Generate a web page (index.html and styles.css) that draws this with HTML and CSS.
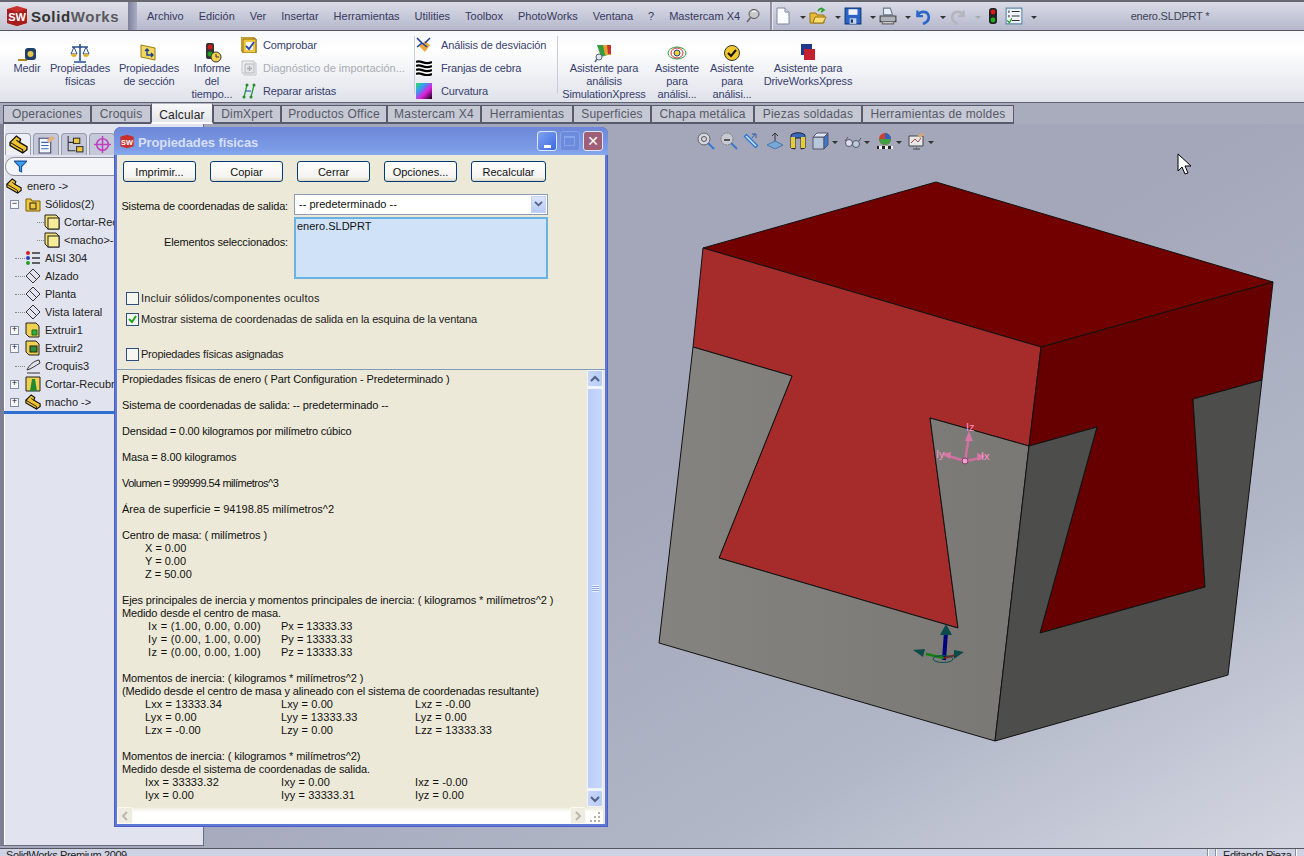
FILE: index.html
```html
<!DOCTYPE html>
<html lang="es">
<head>
<meta charset="utf-8">
<title>SolidWorks - enero.SLDPRT</title>
<link rel="stylesheet" href="styles.css">
</head>
<body>
<div class="app">
  <header class="topbar">
    <div class="logo">
      <svg class="swcube" viewBox="0 0 24 22"><path d="M2 4 12 1l10 3v14l-10 3-10-3z" fill="#c8302c"/><path d="M2 4l10 3 10-3v14l-10 3-10-3z" fill="#a81c1c"/><text x="12" y="16" class="swtxt">SW</text></svg>
      <span class="logoname"><b>Solid</b><i>Works</i></span>
    </div>
    <div class="logoedge"></div>
    <nav class="menu">
      <span>Archivo</span><span>Edición</span><span>Ver</span><span>Insertar</span><span>Herramientas</span><span>Utilities</span><span>Toolbox</span><span>PhotoWorks</span><span>Ventana</span><span>?</span><span>Mastercam X4</span>
      <svg class="pin" viewBox="0 0 16 16"><path d="M3 14l4-5" stroke="#666" stroke-width="1.5"/><ellipse cx="10" cy="6" rx="5" ry="4.5" fill="#c9c9c9" stroke="#555"/><path d="M8 4a3 3 0 0 1 4 0" stroke="#fff" fill="none"/></svg>
    </nav>
    <div class="quick">
      <svg class="qi" viewBox="0 0 16 18"><path d="M2 1h8l4 4v12H2z" fill="#fafcff" stroke="#7c8aa0"/><path d="M10 1v4h4" fill="#d5dce8" stroke="#7c8aa0"/></svg><i class="arr"></i>
      <svg class="qi" viewBox="0 0 18 18"><path d="M1 6h6l1 2h7v8H1z" fill="#e8b93a" stroke="#9a7412"/><path d="M4 16l2-6h11l-3 6z" fill="#f8dc74" stroke="#9a7412"/><path d="M9 4c2-3 4-3 5-1M12 1l3 2-3 2" stroke="#2ca02c" stroke-width="1.6" fill="none"/></svg><i class="arr"></i>
      <svg class="qi" viewBox="0 0 16 16"><path d="M1 1h14v14H1z" fill="#2b63c6" stroke="#123a80"/><path d="M4 2h8v5H4z" fill="#f0f4fa"/><path d="M5 10h6v5H5z" fill="#c9d3e2"/><path d="M6 11h2v3H6z" fill="#123a80"/></svg><i class="arr"></i>
      <svg class="qi" viewBox="0 0 16 16"><path d="M4 1h6l2 6H4z" fill="#e8eef8" stroke="#6b7a90"/><path d="M1 8h14v5H1z" fill="#aeb2ba" stroke="#444"/><path d="M3 13h10v2H3z" fill="#eee" stroke="#666"/></svg><i class="arr"></i>
      <svg class="qi" viewBox="0 0 16 16"><path d="M3 3v5h5" fill="none" stroke="#2b66c8" stroke-width="2"/><path d="M3 8c2-5 9-5 10 0s-3 6-5 7" fill="none" stroke="#2b66c8" stroke-width="2.4"/></svg><i class="arr"></i>
      <svg class="qi" viewBox="0 0 16 16"><path d="M13 3v5H8" fill="none" stroke="#b4b6bb" stroke-width="2"/><path d="M13 8C11 3 4 3 3 8s3 6 5 7" fill="none" stroke="#b4b6bb" stroke-width="2.4"/></svg><i class="arr off"></i>
      <svg class="qi" viewBox="0 0 16 18"><rect x="4" y="1" width="8" height="16" rx="3" fill="#222"/><circle cx="8" cy="5" r="2.4" fill="#e01818"/><circle cx="8" cy="13" r="2.4" fill="#20b020"/></svg>
      <svg class="qi qlist" viewBox="0 0 16 16"><path d="M1 1h14v14H1z" fill="#eef3f8" stroke="#5f8aa8"/><path d="M6 4h7M6 8h7M6 12h7" stroke="#333"/><path d="M3 3h1v2H3zM3 7h1v2H3z" fill="#333"/><path d="M2 12l2 2 2-4" stroke="#1a9a1a" fill="none"/></svg><i class="arr"></i>
    </div>
    <div class="doc">enero.SLDPRT *</div>
  </header>

  <section class="ribbon">
    <div class="rb w38">
      <svg class="ri" viewBox="0 0 22 22"><path d="M2 18h9" stroke="#b08a20" stroke-width="2"/><rect x="9" y="6" width="11" height="12" rx="3" fill="#1f3f66"/><circle cx="14.500" cy="12" r="3" fill="#e5c64a"/></svg>
      <span>Medir</span>
    </div>
    <div class="rb w68">
      <svg class="ri" viewBox="0 0 22 22"><path d="M11 2v17M3 5h16M5 20h12" stroke="#274c8c" stroke-width="1.6"/><path d="M5 5l-3 7h6zM17 5l-3 7h6z" fill="none" stroke="#274c8c"/><path d="M2 12h6a3 3 0 0 1-6 0zM14 12h6a3 3 0 0 1-6 0z" fill="#e0b030"/></svg>
      <span>Propiedades<br>físicas</span>
    </div>
    <div class="rb w70">
      <svg class="ri" viewBox="0 0 22 22"><path d="M3 3l14 3v12L3 15z" fill="#f0d860" stroke="#9a7d12"/><path d="M9 7v6h6M7 9l2-2 2 2M13 11l2 2-2 2" stroke="#1f3f8c" fill="none" stroke-width="1.400"/></svg>
      <span>Propiedades<br>de sección</span>
    </div>
    <div class="rb w56">
      <svg class="ri" viewBox="0 0 22 22"><rect x="5" y="1" width="8" height="16" rx="2" fill="#333"/><circle cx="9" cy="5" r="2.500" fill="#d01818"/><circle cx="9" cy="12" r="2.500" fill="#20a020"/><circle cx="15" cy="15" r="5" fill="#f2d050" stroke="#333"/><path d="M15 12v3h3" stroke="#333" fill="none"/></svg>
      <span>Informe<br>del<br>tiempo...</span>
    </div>
    <div class="rcol c174">
      <div class="rs"><svg class="si" viewBox="0 0 16 16"><path d="M0 0h13v2h2v14H2v-2H0z" fill="#ecc14a" stroke="#8e6d10" stroke-width=".8"/><path d="M2 2h13v14H2z" fill="#f0c840" stroke="#8e6d10"/><path d="M5 5h7v8H5z" fill="#f8f8ff"/><path d="M5 9l3 3 5-7" stroke="#2a4ab0" stroke-width="1.800" fill="none"/></svg><span>Comprobar</span></div>
      <div class="rs dis"><svg class="si" viewBox="0 0 16 16"><path d="M1 1h12v2h2v12H3v-2H1z" fill="#eee" stroke="#c2c4ca"/><path d="M4 4h9v9H4z" fill="#e4e5e8" stroke="#b4b6bc"/><path d="M8.500 6v5M6 8.500h5" stroke="#aaa" stroke-width="1.400"/></svg><span>Diagnóstico de importación...</span></div>
      <div class="rs"><svg class="si" viewBox="0 0 16 16"><path d="M3 14 6 2M10 14 13 2" stroke="#20a030" stroke-width="1.300"/><circle cx="3" cy="14" r="1.500" fill="#2a8a2a"/><circle cx="6" cy="2" r="1.500" fill="#2a8a2a"/><circle cx="10" cy="14" r="1.500" fill="#2a8a2a"/><circle cx="13" cy="2" r="1.500" fill="#2a8a2a"/><path d="M5 8h5" stroke="#2040b0"/></svg><span>Reparar aristas</span></div>
    </div>
    <i class="rsep"></i>
    <div class="rcol c142">
      <div class="rs"><svg class="si" viewBox="0 0 16 16"><path d="M3 9l6-5 5 4-5 7z" fill="#e9a83c"/><path d="M1 1l5 5M14 1l-5 5M1 10l5-4M6 6l5 4" stroke="#1b3aa8" stroke-width="1.500"/></svg><span>Análisis de desviación</span></div>
      <div class="rs"><svg class="si" viewBox="0 0 16 16"><path d="M0 0h16v16H0z" fill="#fff"/><path d="M0 2c5-3 8 4 16 0M0 6c5-3 8 4 16 0M0 10c5-3 8 4 16 0M0 14c5-3 8 4 16 0" stroke="#000" stroke-width="2.200" fill="none"/></svg><span>Franjas de cebra</span></div>
      <div class="rs"><svg class="si" viewBox="0 0 16 16"><defs><linearGradient id="cv" x1="0" y1="0" x2="1" y2="1"><stop offset="0" stop-color="#30e060"/><stop offset=".3" stop-color="#30a0f0"/><stop offset=".6" stop-color="#e020e0"/><stop offset="1" stop-color="#100010"/></linearGradient></defs><rect width="16" height="16" fill="url(#cv)"/></svg><span>Curvatura</span></div>
    </div>
    <i class="rsep"></i>
    <div class="rb w90 ml2">
      <svg class="ri" viewBox="0 0 22 22"><path d="M4 3h14v9L8 15z" fill="#3a9a40"/><path d="M10 3h8v10h-6z" fill="#e8a030"/><path d="M14 3h4v9h-3z" fill="#c83030"/><circle cx="6" cy="15" r="3" fill="#dfe8f0" stroke="#567"/><path d="M4 17l-2 3" stroke="#567" stroke-width="1.500"/></svg>
      <span>Asistente para<br>análisis<br>SimulationXpress</span>
    </div>
    <div class="rb w56">
      <svg class="ri" viewBox="0 0 22 22"><ellipse cx="11" cy="11" rx="9" ry="6" fill="none" stroke="#2a9a40"/><ellipse cx="11" cy="11" rx="6" ry="5" fill="none" stroke="#d03030"/><circle cx="11" cy="11" r="3" fill="#f0d020" stroke="#2040a0"/></svg>
      <span>Asistente<br>para<br>análisi...</span>
    </div>
    <div class="rb w54">
      <svg class="ri" viewBox="0 0 22 22"><circle cx="11" cy="11" r="7.500" fill="#f2c830" stroke="#333"/><path d="M7 11l3 3 5-6" stroke="#111" stroke-width="2" fill="none"/></svg>
      <span>Asistente<br>para<br>análisi...</span>
    </div>
    <div class="rb w98">
      <svg class="ri" viewBox="0 0 22 22"><rect x="4" y="2" width="11" height="11" fill="#1f3a8c"/><rect x="7" y="7" width="11" height="11" fill="#c42030"/></svg>
      <span>Asistente para<br>DriveWorksXpress</span>
    </div>
  </section>

  <div class="tabstrip">
    <span class="tab t88">Operaciones</span><span class="tab t60">Croquis</span><span class="tab active t62">Calcular</span><span class="tab t68">DimXpert</span><span class="tab t106">Productos Office</span><span class="tab t94">Mastercam X4</span><span class="tab t92">Herramientas</span><span class="tab t78">Superficies</span><span class="tab t103">Chapa metálica</span><span class="tab t108">Piezas soldadas</span><span class="tab t152">Herramientas de moldes</span>
  </div>

  <main class="work">
    <aside class="panel">
      <div class="ptabs">
        <span class="ptab on"><svg viewBox="0 0 18 18"><path d="M1 7 7 1l4 3-1 3 7 4v3l-4 3-12-7z" fill="#f0c430" stroke="#111" stroke-width="1.300"/><path d="M1 7l12 7v3M7 5l3 2" fill="none" stroke="#111"/></svg></span>
        <span class="ptab"><svg viewBox="0 0 18 18"><path d="M2 3h11v14H2z" fill="#f4f8ff" stroke="#446"/><path d="M4 7h7M4 10h7M4 13h7" stroke="#3a6ac0"/><path d="M9 5l5-4 3 2-5 4z" fill="#e8b080"/></svg></span>
        <span class="ptab"><svg viewBox="0 0 18 18"><path d="M3 1v14h7M3 7h7" stroke="#333" fill="none"/><rect x="8" y="3" width="6" height="5" fill="#f0c840" stroke="#333"/><rect x="11" y="11" width="6" height="5" fill="#f0c840" stroke="#333"/></svg></span>
        <span class="ptab"><svg viewBox="0 0 18 18"><circle cx="9" cy="9" r="5.500" fill="none" stroke="#c040c0" stroke-width="1.500"/><path d="M9 1v16M1 9h16" stroke="#c040c0" stroke-width="1.500"/></svg></span>
      </div>
      <div class="filter"><svg viewBox="0 0 12 12"><path d="M0 1h12L7 6v5L5 10V6z" fill="#38a0e8" stroke="#1a50a0"/></svg></div>
      <ul class="tree">
        <li class="root"><svg class="ti" viewBox="0 0 18 18"><path d="M1 7 7 1l4 3-1 3 7 4v3l-4 3-12-7z" fill="#f0c430" stroke="#111" stroke-width="1.300"/><path d="M1 7l12 7v3M7 5l3 2" fill="none" stroke="#111"/></svg><span>enero -&gt;</span></li>
        <li><b class="box">−</b><svg class="ti" viewBox="0 0 16 16"><path d="M1 3h5l1 2h8v10H1z" fill="#f0c840" stroke="#7a5c00"/><rect x="5" y="7" width="6" height="6" fill="none" stroke="#222"/></svg><span>Sólidos(2)</span></li>
        <li class="sub"><svg class="ti" viewBox="0 0 16 16"><path d="M1 1h11l3 3v11H4l-3-3z" fill="#f6e070" stroke="#222"/><rect x="4" y="4" width="11" height="11" fill="#f8ec98" stroke="#222"/></svg><span>Cortar-Recubrir1</span></li>
        <li class="sub"><svg class="ti" viewBox="0 0 16 16"><path d="M1 1h11l3 3v11H4l-3-3z" fill="#f6e070" stroke="#222"/><rect x="4" y="4" width="11" height="11" fill="#f8ec98" stroke="#222"/></svg><span>&lt;macho&gt;-&lt;Saliente&gt;</span></li>
        <li class="nob"><svg class="ti" viewBox="0 0 16 16"><circle cx="3" cy="3" r="2" fill="#d02020"/><circle cx="3" cy="8" r="2" fill="#2040c0"/><circle cx="3" cy="13" r="2" fill="#20a020"/><path d="M7 3h8M7 8h8M7 13h8" stroke="#333" stroke-width="1.500"/></svg><span>AISI 304</span></li>
        <li class="nob"><svg class="ti" viewBox="0 0 16 16"><path d="M8 1l7 7-7 7-7-7zM5 5l7 7" fill="none" stroke="#333"/></svg><span>Alzado</span></li>
        <li class="nob"><svg class="ti" viewBox="0 0 16 16"><path d="M8 1l7 7-7 7-7-7zM5 5l7 7" fill="none" stroke="#333"/></svg><span>Planta</span></li>
        <li class="nob"><svg class="ti" viewBox="0 0 16 16"><path d="M8 1l7 7-7 7-7-7zM5 5l7 7" fill="none" stroke="#333"/></svg><span>Vista lateral</span></li>
        <li><b class="box">+</b><svg class="ti" viewBox="0 0 16 16"><path d="M1 1h10l3 3v11H4l-3-3z" fill="#f0d050" stroke="#222"/><path d="M7 8l5 0v5H7z" fill="#30b040" stroke="#1a6a20"/></svg><span>Extruir1</span></li>
        <li><b class="box">+</b><svg class="ti" viewBox="0 0 16 16"><path d="M1 1h10l3 3v11H4l-3-3z" fill="#f0d050" stroke="#222"/><rect x="5" y="6" width="7" height="6" fill="#30903a" stroke="#222"/></svg><span>Extruir2</span></li>
        <li class="nob"><svg class="ti" viewBox="0 0 16 16"><path d="M2 15h13M2 12C4 7 9 3 14 2l1 3C10 8 6 11 2 12z" fill="none" stroke="#333"/></svg><span>Croquis3</span></li>
        <li><b class="box">+</b><svg class="ti" viewBox="0 0 16 16"><path d="M1 1h14v14H1z" fill="#f0d050" stroke="#222"/><path d="M5 15 7 3h3l2 12z" fill="#208a30"/></svg><span>Cortar-Recubrir1</span></li>
        <li><b class="box">+</b><svg class="ti" viewBox="0 0 18 18"><path d="M1 7 7 1l4 3-1 3 7 4v3l-4 3-12-7z" fill="#f0c430" stroke="#111" stroke-width="1.300"/><path d="M1 7l12 7v3M7 5l3 2" fill="none" stroke="#111"/></svg><span>macho -&gt;</span></li>
      </ul>
      <div class="prule"></div>
    </aside>

    <section class="viewport">
      <svg class="model" viewBox="204 124 1100 724">
        <defs><linearGradient id="gl" x1="0" y1="0" x2="1" y2="0"><stop offset="0" stop-color="#858380"/><stop offset="1" stop-color="#7a7874"/></linearGradient></defs>
        <g stroke="#111" stroke-width="1" stroke-linejoin="round">
          <path d="M703 248 936 182 1273 282 1041 347z" fill="#730000"/>
          <path d="M693 347 703 248 1041 347 1029 446 930 418 958 628 719 558 792 376z" fill="#a62c2c"/>
          <path d="M693 347 792 376 719 558 958 628 930 418 1029 446 995 741 659 643z" fill="url(#gl)"/>
          <path d="M1041 347 1273 282 1262 380 1193 399 1205 587 1040 633 1097 427 1029 446z" fill="#660000"/>
          <path d="M1029 446 1097 427 1040 633 1205 587 1193 399 1262 380 1228 675 995 741z" fill="#4d4d4b"/>
        </g>
        <g class="triad">
          <path d="M965 461 969 436M965 461 945 455M965 461 981 458" stroke="#d070a0" stroke-width="2.500"/>
          <path d="M969 431l-4 10h8zM942 454l9-2-1 7zM985 456l-8-3 1 8z" fill="#d878a8"/>
          <circle cx="965" cy="461" r="3" fill="#f0a0d0" stroke="#804060"/>
          <text x="966" y="431">Iz</text><text x="936" y="458">Iy</text><text x="981" y="460">Ix</text>
        </g>
        <path d="M944 660 946 632" stroke="#000080" stroke-width="4"/>
        <path d="M946 624l-6 11h12z" fill="#0d4a4a"/>
        <path d="M944 658 926 654" stroke="#108010" stroke-width="2.500"/>
        <path d="M913 650l12-1-2 8z" fill="#0d4a4a"/>
        <path d="M944 658 956 655" stroke="#802020" stroke-width="2"/>
        <path d="M964 652l-10-2 0 9z" fill="#0d4a4a"/>
        <ellipse cx="943" cy="659" rx="10" ry="3.500" fill="none" stroke="#0d5050"/>
      </svg>
      <div class="viewbar">
        <svg viewBox="0 0 18 18"><circle cx="7" cy="7" r="6" fill="#d4d6dc" stroke="#666"/><circle cx="7" cy="7" r="2.500" fill="none" stroke="#555"/><path d="M11 11l6 6" stroke="#3a78d0" stroke-width="2"/></svg>
        <svg viewBox="0 0 18 18"><circle cx="7" cy="7" r="6" fill="#c8cad2" stroke="#777" stroke-dasharray="2 1"/><path d="M4 8h6" stroke="#555" stroke-width="2"/><path d="M11 11l6 6" stroke="#3a78d0" stroke-width="2"/></svg>
        <svg viewBox="0 0 18 18"><path d="M2 3l12 12" stroke="#2c78d0" stroke-width="4"/><path d="M3 4l10 10" stroke="#cfe4fa" stroke-width="1.500"/><path d="M9 6l3-4M9 2h4v4" stroke="#2c60b0" fill="none"/></svg>
        <svg viewBox="0 0 18 18"><path d="M9 1v11M6 4l3-3 3 3" stroke="#333" fill="none"/><path d="M1 13l8-4 8 4-8 4z" fill="#78a8d8" stroke="#4878a8"/></svg>
        <svg viewBox="0 0 18 18"><path d="M2 3c3-3 11-3 14 0v13l-4 1V6H6v11l-4-1z" fill="#3a68c0" stroke="#223"/><path d="M2 5h4v11H2zM12 5h4v11h-4z" fill="#e8cc30"/></svg>
        <svg viewBox="0 0 18 18"><path d="M1 5h11v12H1z" fill="#b8c8dc" stroke="#556"/><path d="M1 5l4-4h11L12 5z" fill="#dfe8f2" stroke="#556"/><path d="M12 5l4-4v12l-4 4z" fill="#3a78d0" stroke="#556"/></svg><i class="arr"></i>
        <svg class="gap" viewBox="0 0 18 18"><circle cx="5" cy="11" r="3.500" fill="#dde" stroke="#556"/><circle cx="12" cy="12" r="3.500" fill="#bcd" stroke="#556"/><path d="M8 11h1M1 9l3-4M15 9l2-3" stroke="#556" fill="none"/></svg><i class="arr"></i>
        <svg class="gap" viewBox="0 0 18 18"><circle cx="9" cy="7" r="6" fill="#d04030"/><path d="M9 7V1a6 6 0 0 1 6 6z" fill="#3060c0"/><path d="M9 7h6a6 6 0 0 1-6 6 6 6 0 0 1-6-6z" fill="#40a040"/><path d="M1 14h16v3H1z" fill="#222"/><path d="M3 14h3v3H3zM9 14h3v3H9zM15 14h2v3h-2z" fill="#eee"/></svg><i class="arr"></i>
        <svg class="gap" viewBox="0 0 18 18"><path d="M1 4h14v10H1z" fill="#e8e8ec" stroke="#444"/><path d="M3 11l4-4 3 3 3-4" stroke="#a05040" fill="none"/><path d="M8 16h1M5 17h7" stroke="#444"/><path d="M9 4l5-3 3 1-5 4z" fill="#d8a878"/></svg><i class="arr"></i>
      </div>
      <svg class="cursor" viewBox="0 0 14 23"><path d="M1 1v17l4-4 3 7 3-1-3-7h6z" fill="#fff" stroke="#000"/></svg>
    </section>

    <div class="dialog">
      <div class="dtitle">
        <svg class="swcube small" viewBox="0 0 24 22"><path d="M2 4 12 1l10 3v14l-10 3-10-3z" fill="#c8302c"/><text x="12" y="16" class="swtxt">SW</text></svg>
        <span class="dname">Propiedades físicas</span>
        <span class="wbtn min"><i></i></span><span class="wbtn max"><i></i></span><span class="wbtn close">✕</span>
      </div>
      <div class="dbody">
        <div class="btnrow">
          <button>Imprimir...</button><button>Copiar</button><button>Cerrar</button><button>Opciones...</button><button class="wide">Recalcular</button>
        </div>
        <div class="frm">
          <label>Sistema de coordenadas de salida:</label>
          <div class="combo"><span>-- predeterminado --</span><b class="cbtn"><svg viewBox="0 0 10 8"><path d="M1 1l4 4 4-4" fill="none" stroke="#4d6185" stroke-width="2"/></svg></b></div>
          <label class="lbl2">Elementos seleccionados:</label>
          <div class="listbox">enero.SLDPRT</div>
        </div>
        <div class="chk c1"><i class="cb"></i>Incluir sólidos/componentes ocultos</div>
        <div class="chk c2"><i class="cb"><svg viewBox="0 0 11 11"><path d="M2 5l3 3 4-6" fill="none" stroke="#21a121" stroke-width="2"/></svg></i>Mostrar sistema de coordenadas de salida en la esquina de la ventana</div>
        <div class="chk c3"><i class="cb"></i>Propiedades físicas asignadas</div>
        <div class="results">
          <div class="rtext">
            <div class="ln">Propiedades físicas de enero ( Part Configuration - Predeterminado )</div>
            <div class="ln"></div>
            <div class="ln">Sistema de coordenadas de salida: -- predeterminado --</div>
            <div class="ln"></div>
            <div class="ln k2">Densidad = 0.00 kilogramos por milímetro cúbico</div>
            <div class="ln"></div>
            <div class="ln">Masa = 8.00 kilogramos</div>
            <div class="ln"></div>
            <div class="ln k5">Volumen = 999999.54 milímetros^3</div>
            <div class="ln"></div>
            <div class="ln k0">Área de superficie = 94198.85 milímetros^2</div>
            <div class="ln"></div>
            <div class="ln">Centro de masa: ( milímetros )</div>
            <div class="ln ind">X = 0.00</div>
            <div class="ln ind">Y = 0.00</div>
            <div class="ln ind">Z = 50.00</div>
            <div class="ln"></div>
            <div class="ln">Ejes principales de inercia y momentos principales de inercia: ( kilogramos * milímetros^2 )</div>
            <div class="ln">Medido desde el centro de masa.</div>
            <div class="ln axes"><span>Ix = (1.00, 0.00, 0.00)</span><span>Px = 13333.33</span></div>
            <div class="ln axes"><span>Iy = (0.00, 1.00, 0.00)</span><span>Py = 13333.33</span></div>
            <div class="ln axes"><span>Iz = (0.00, 0.00, 1.00)</span><span>Pz = 13333.33</span></div>
            <div class="ln"></div>
            <div class="ln">Momentos de inercia: ( kilogramos * milímetros^2 )</div>
            <div class="ln">(Medido desde el centro de masa y alineado con el sistema de coordenadas resultante)</div>
            <div class="ln tri"><span>Lxx = 13333.34</span><span>Lxy = 0.00</span><span>Lxz = -0.00</span></div>
            <div class="ln tri"><span>Lyx = 0.00</span><span>Lyy = 13333.33</span><span>Lyz = 0.00</span></div>
            <div class="ln tri"><span>Lzx = -0.00</span><span>Lzy = 0.00</span><span>Lzz = 13333.33</span></div>
            <div class="ln"></div>
            <div class="ln">Momentos de inercia: ( kilogramos * milímetros^2)</div>
            <div class="ln">Medido desde el sistema de coordenadas de salida.</div>
            <div class="ln tri"><span>Ixx = 33333.32</span><span>Ixy = 0.00</span><span>Ixz = -0.00</span></div>
            <div class="ln tri"><span>Iyx = 0.00</span><span>Iyy = 33333.31</span><span>Iyz = 0.00</span></div>
          </div>
          <div class="vscroll">
            <b class="sbtn"><svg viewBox="0 0 10 8"><path d="M1 6l4-4 4 4" fill="none" stroke="#4d6185" stroke-width="2"/></svg></b>
            <div class="thumb"><i></i></div>
            <b class="sbtn"><svg viewBox="0 0 10 8"><path d="M1 2l4 4 4-4" fill="none" stroke="#4d6185" stroke-width="2"/></svg></b>
          </div>
          <div class="hscroll">
            <b class="hbtn"><svg viewBox="0 0 8 10"><path d="M6 1 2 5l4 4" fill="none" stroke="#b9b9b0" stroke-width="2"/></svg></b>
            <span class="hspace"></span>
            <b class="hbtn"><svg viewBox="0 0 8 10"><path d="M2 1l4 4-4 4" fill="none" stroke="#b9b9b0" stroke-width="2"/></svg></b>
            <svg class="grip" viewBox="0 0 12 12"><path d="M9 1h2v2H9zM5 5h2v2H5zM9 5h2v2H9zM1 9h2v2H1zM5 9h2v2H5zM9 9h2v2H9z" fill="#b5b2a5"/></svg>
          </div>
        </div>
      </div>
    </div>
  </main>

  <footer class="status">
    <span class="stname">SolidWorks Premium 2009</span>
    <i class="stsep"></i><i class="stsep"></i>
    <span class="stedit">Editando Pieza</span>
    <i class="stsep"></i>
  </footer>
</div>
</body>
</html>
```
FILE: styles.css
```css
* { box-sizing: border-box; }
html, body { margin: 0; padding: 0; height: 100%; overflow: hidden; }
body { font: 11px/13px "Liberation Sans", Arial, sans-serif; color: #111; }
i, b { font-style: normal; display: block; }
.app { width: 1304px; height: 856px; display: flex; flex-direction: column; overflow: hidden; background: #a4a8ba; position: relative; }

/* top bar */
.topbar { height: 31px; flex: none; display: flex; background: linear-gradient(#d9dbe6, #b5b8cc); border-top: 2px solid #67686f; border-bottom: 1px solid #55565f; }
.logo { width: 128px; display: flex; align-items: center; padding-left: 5px; gap: 2px; background: linear-gradient(#dedfe8, #c2c4d2); }
.logoedge { width: 9px; background: linear-gradient(90deg, #7e8199, #a9adc6); }
.swcube { width: 24px; height: 22px; flex: none; }
.swcube.small { width: 16px; height: 15px; }
.swtxt { font: bold 11px "Liberation Sans", sans-serif; fill: #fff; text-anchor: middle; }
.logoname { font-size: 15px; font-weight: bold; letter-spacing: .6px; color: #333; white-space: nowrap; }
.logoname b { display: inline; }
.logoname i { display: inline; color: #5a5a5f; }
.menu { width: 633px; display: flex; align-items: center; padding-left: 10px; gap: 15px; color: #36395f; font-size: 11px; white-space: nowrap; }
.pin { width: 16px; height: 16px; margin-left: -11px; }
.quick { display: flex; align-items: center; padding-left: 2px; border-left: 2px solid #8f92a5; width: 345px; box-shadow: inset 1px 0 #e8e9f0; height: 28px; }
.qi { width: 18px; height: 18px; margin-right: 4px; }
.qlist { margin-left: -1px; }
.arr { width: 0; height: 0; border: 3px solid transparent; border-top: 3px solid #333; border-bottom: 0; margin: 2px 3px 0 4px; }
.arr.off { border-top-color: #aaa; }
.doc { width: 150px; text-align: center; align-self: center; color: #3f4256; font-size: 11px; letter-spacing: -.2px; margin-left: -20px; }

/* ribbon */
.ribbon { height: 71px; flex: none; display: flex; padding-left: 8px; background: linear-gradient(#f7f8fb, #fff 25%, #dfe2ea); color: #37406e; letter-spacing: -.14px; }
.rb { flex: none; text-align: center; display: flex; flex-direction: column; align-items: center; padding-top: 11px; line-height: 13px; white-space: nowrap; }
.ri { width: 22px; height: 22px; margin-bottom: -2px; flex: none; }
.w38 { width: 38px; } .w54 { width: 54px; } .w56 { width: 56px; } .w68 { width: 68px; } .w70 { width: 70px; } .w90 { width: 90px; } .w98 { width: 98px; }
.ml2 { margin-left: 1px; }
.rcol { flex: none; display: flex; flex-direction: column; padding-top: 6px; gap: 7px; }
.c174 { width: 174px; padding-left: 1px; }
.c142 { width: 142px; padding-left: 1px; }
.c142 .rs { gap: 9px; }
.rs { display: flex; align-items: center; gap: 6px; height: 16px; white-space: nowrap; }
.si { width: 16px; height: 16px; flex: none; }
.dis { color: #a9abb4; letter-spacing: 0; }
.rsep { width: 1px; height: 58px; margin-top: 5px; background: #c9ccd6; flex: none; }

/* tabs */
.tabstrip { height: 22px; flex: none; display: flex; padding: 2px 0 0 3px; border-top: 1px solid #5e606b; background: #a8acbc; }
.tab { height: 19px; line-height: 17px; text-align: center; font-size: 12px; letter-spacing: .2px; color: #555867; background: #c6c8d3; border: 1px solid #585b6b; border-width: 1px 1px 2px 1px; white-space: nowrap; }
.tab.active { background: linear-gradient(#f8f8fa, #e3e4ea); color: #222; height: 21px; border-color: #b4b7c4 #585b6b #fff #585b6b; margin-top: -2px; line-height: 22px; }
.t60 { width: 60px; } .t62 { width: 62px; } .t68 { width: 68px; } .t78 { width: 78px; } .t88 { width: 88px; } .t92 { width: 92px; } .t94 { width: 94px; } .t103 { width: 103px; } .t106 { width: 106px; } .t108 { width: 108px; } .t152 { width: 152px; }

/* work area */
.work { flex: 1; position: relative; display: flex; overflow: hidden; min-height: 0; }
.panel { width: 204px; flex: none; margin-bottom: 2px; background: #e1e4ee; border-left: 4px solid #7d8092; border-right: 1px solid #6b6e7c; border-bottom: 1px solid #6b6e7c; box-shadow: inset 1px 0 #fff; padding-top: 9px; position: relative; z-index: 1; }
.ptabs { display: flex; gap: 2px; height: 22px; padding-left: 1px; }
.ptab { width: 26px; height: 22px; background: #c4c8d8; border: 1px solid #9a9dad; border-bottom: 0; border-radius: 4px 4px 0 0; display: flex; align-items: center; justify-content: center; }
.ptab.on { background: #eef0f6; }
.ptab svg { width: 19px; height: 19px; }
.filter { height: 19px; margin: 2px 0 0 1px; border: 1px solid #8d90a0; border-radius: 9px; background: #f4f5f8; padding: 2px 0 0 8px; }
.filter svg { width: 13px; height: 13px; display: block; }
.tree { list-style: none; margin: 1px 0 0; padding: 0; white-space: nowrap; color: #222; }
.tree li { height: 18px; display: flex; align-items: center; padding-left: 21px; position: relative; }
.tree li.root { padding-left: 2px; }
.tree li.root .ti { margin-right: 5px; }
.tree li.sub { padding-left: 40px; }
.tree li.sub::before { content: ""; position: absolute; left: 33px; width: 7px; top: 9px; border-top: 1px dotted #888; }
.tree li.nob::before { content: ""; position: absolute; left: 11px; width: 10px; top: 9px; border-top: 1px dotted #888; }
.ti { width: 16px; height: 16px; margin-right: 4px; flex: none; }
.box { position: absolute; left: 6px; top: 5px; width: 9px; height: 9px; border: 1px solid #7f8ea5; background: #f6f7fa; font: 9px/7px "Liberation Mono", monospace; text-align: center; color: #111; }
.prule { height: 3px; background: #2f6fd0; }

/* viewport */
.viewport { flex: 1; position: relative; background: linear-gradient(150deg, #a3a7b9 0%, #a3a7b9 45%, #b2b7c8 75%, #d4d7e1 100%); }
.model { position: absolute; left: 0; top: 0; width: 1100px; height: 724px; }
.triad text { font: 11px "Liberation Sans", sans-serif; fill: #ff90c8; }
.viewbar { position: relative; display: flex; align-items: center; gap: 5px; padding: 8px 0 0 493px; }
.viewbar svg { width: 18px; height: 18px; flex: none; }
.viewbar .arr { margin: 2px 0 0 -3px; }
.viewbar .gap { margin-left: 1px; }
.cursor { position: absolute; left: 973px; top: 29px; width: 14px; height: 23px; }

/* dialog */
.dialog { position: absolute; left: 114px; top: 3px; width: 494px; height: 700px; z-index: 3; padding: 0 3px 3px; background: #5f78d8; border-radius: 7px 7px 0 0; box-shadow: inset 0 0 0 1px #4a60c8; display: flex; flex-direction: column; }
.dtitle { height: 28px; flex: none; margin: 0 -3px; padding: 0 5px; display: flex; align-items: center; border-radius: 7px 7px 0 0; background: linear-gradient(#6d87d8, #7c9ce6 80%, #88a8ee); }
.dname { font: bold 13px "Liberation Sans", sans-serif; color: #d7dff4; margin-left: 3px; padding-top: 3px; flex: 1; letter-spacing: -.1px; }
.wbtn { width: 20px; height: 20px; border: 1px solid #dfe6f7; border-radius: 3px; margin-left: 3px; display: flex; position: relative; color: #fff; }
.min { background: linear-gradient(135deg, #7fa4f2, #3c6ae0); }
.min i { width: 7px; height: 3px; background: #fff; margin: 13px 0 0 6px; }
.max { background: #6d8bdc; border-color: #88a0e4; }
.max i { width: 11px; height: 10px; border: 1px solid #88a4e8; border-top-width: 2px; margin: 4px 0 0 3px; }
.close { background: #a05f78; align-items: center; justify-content: center; font: bold 14px "DejaVu Sans", sans-serif; }
.dbody { flex: 1; min-height: 0; background: #ece9d8; display: flex; flex-direction: column; }
.btnrow { display: flex; gap: 14px; padding: 6px 0 0 6px; height: 27px; flex: none; }
button { width: 73px; height: 21px; font: inherit; color: #111; padding: 1px 0 0; border: 1px solid #003c74; border-radius: 3px; background: linear-gradient(#fff, #f4f3ee 80%, #dcd8c8); }
button.wide { width: 75px; }
.frm { display: grid; grid-template-columns: 171px 254px; column-gap: 6px; margin-top: 12px; }
.frm label { align-self: center; text-align: right; padding-top: 4px; white-space: nowrap; letter-spacing: -.16px; }
.frm .lbl2 { padding: 0 0 10px; }
.combo { height: 21px; border: 1px solid #8a9cb6; background: #fff; display: flex; align-items: center; justify-content: space-between; padding: 0 1px 0 4px; }
.cbtn { width: 15px; height: 17px; background: linear-gradient(#dbe5fb, #b8c9f4); border: 1px solid #c5d3f2; display: flex; align-items: center; justify-content: center; }
.cbtn svg { width: 9px; height: 7px; }
.listbox { margin-top: 2px; height: 62px; background: #cfe2f8; border: 2px solid #6cb2e0; padding: 1px; }
.chk { display: flex; align-items: center; padding-left: 9px; height: 15px; white-space: nowrap; color: #222; }
.c1 { margin-top: 12px; letter-spacing: .14px; } .c2 { margin-top: 6px; letter-spacing: -.13px; } .c3 { margin-top: 20px; letter-spacing: -.24px; }
.cb { width: 13px; height: 13px; margin-right: 2px; background: #f6f6f1; border: 1px solid #2a4f80; flex: none; }
.cb svg { display: block; width: 11px; height: 11px; }
.results { flex: 1; min-height: 0; margin-top: 7px; border-top: 1px solid #7f9db9; display: grid; grid-template-columns: 1fr 16px; grid-template-rows: 1fr 17px; padding-right: 2px; }
.rtext { padding: 3px 0 0 5px; overflow: hidden; white-space: nowrap; letter-spacing: -.12px; }
.ln { height: 13px; }
.k0 { letter-spacing: 0; } .k2 { letter-spacing: -.2px; } .k5 { letter-spacing: -.5px; }
.ind { padding-left: 23px; letter-spacing: 0; }
.axes { display: grid; grid-template-columns: 133px 1fr; padding-left: 26px; letter-spacing: 0; }
.axes span:first-child { letter-spacing: .35px; }
.tri { display: grid; grid-template-columns: 136px 134px 1fr; padding-left: 23px; letter-spacing: .1px; }
.vscroll { display: flex; flex-direction: column; background: #f3f6fd; gap: 1px; }
.sbtn { height: 17px; flex: none; background: linear-gradient(90deg, #c8d7f8, #b8ccf5); border: 1px solid #eef2fb; border-radius: 2px; display: flex; align-items: center; justify-content: center; }
.sbtn svg { width: 10px; height: 8px; }
.thumb { flex: 1; background: linear-gradient(90deg, #bccdf7, #c8d8fb); border: 1px solid #eef2fb; border-radius: 2px; display: flex; align-items: center; justify-content: center; }
.thumb i { width: 7px; height: 7px; background: repeating-linear-gradient(#eef3fd 0 1px, #8fa6d8 1px 2px); }
.hscroll { grid-column: 1 / 3; display: flex; align-items: center; background: linear-gradient(#ece9d8, #fff 30%, #fdfdfb); }
.hbtn { width: 16px; height: 17px; background: #efede2; border: 1px solid #faf9f4; border-radius: 2px; display: flex; align-items: center; justify-content: center; }
.hbtn svg { width: 8px; height: 10px; }
.hspace { flex: 1; }
.grip { width: 12px; height: 12px; margin: 3px 2px 0 3px; }

/* status bar */
.status { height: 8px; flex: none; display: flex; background: #ced3e4; border-top: 1px solid #55565f; padding-left: 6px; overflow: hidden; color: #222; line-height: 12px; white-space: nowrap; letter-spacing: -.4px; }
.stname { width: 1201px; }
.stsep { width: 2px; height: 12px; flex: none; border-left: 1px solid #8a8d9c; border-right: 1px solid #fff; margin-right: 6px; }
.stedit { width: 72px; flex: none; }
```
